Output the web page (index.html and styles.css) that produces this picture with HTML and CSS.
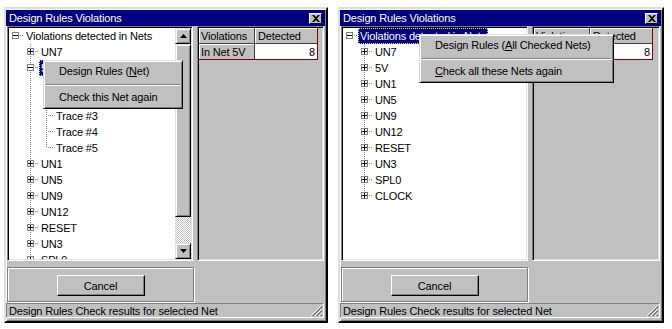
FILE: index.html
```html
<!DOCTYPE html>
<html lang="en">
<head>
    <meta charset="UTF-8">
    <title>Design Rules Violations</title>
    <link rel="stylesheet" href="styles.css">
</head>
<body>
<div class="screen">

    <!-- Left window: one net expanded -->
    <div class="window">
        <div class="titlebar">
            <span class="title">Design Rules Violations</span>
            <span class="close"><svg width="8" height="7" viewBox="0 0 8 7"><path d="M0 0h2l2 2 2-2h2L5 3.5 8 7H6L4 5 2 7H0l3-3.5z" fill="#000"/></svg></span>
        </div>
        <div class="main">
            <div class="tree">
                <div class="items">
                    <div class="row l0"><span class="exp"><span class="box minus"></span></span><span class="label">Violations detected in Nets</span></div>
                    <div class="row l1"><span class="exp"><span class="box plus"></span></span><span class="label">UN7</span></div>
                    <div class="row l1"><span class="exp"><span class="box minus"></span></span><span class="label sel">5V</span></div>
                    <div class="row l2"><span class="label">Trace #1</span></div>
                    <div class="row l2"><span class="label">Trace #2</span></div>
                    <div class="row l2"><span class="label">Trace #3</span></div>
                    <div class="row l2"><span class="label">Trace #4</span></div>
                    <div class="row l2 last"><span class="label">Trace #5</span></div>
                    <div class="row l1"><span class="exp"><span class="box plus"></span></span><span class="label">UN1</span></div>
                    <div class="row l1"><span class="exp"><span class="box plus"></span></span><span class="label">UN5</span></div>
                    <div class="row l1"><span class="exp"><span class="box plus"></span></span><span class="label">UN9</span></div>
                    <div class="row l1"><span class="exp"><span class="box plus"></span></span><span class="label">UN12</span></div>
                    <div class="row l1"><span class="exp"><span class="box plus"></span></span><span class="label">RESET</span></div>
                    <div class="row l1"><span class="exp"><span class="box plus"></span></span><span class="label">UN3</span></div>
                    <div class="row l1"><span class="exp"><span class="box plus"></span></span><span class="label">SPL0</span></div>
                    <div class="row l1 last"><span class="exp"><span class="box plus"></span></span><span class="label">CLOCK</span></div>
                </div>
                <div class="scrollbar">
                    <div class="sb-btn"><svg width="7" height="4" viewBox="0 0 7 4"><path d="M3.5 0L7 4H0z" fill="#000"/></svg></div>
                    <div class="sb-thumb"></div>
                    <div class="sb-track"></div>
                    <div class="sb-btn"><svg width="7" height="4" viewBox="0 0 7 4"><path d="M0 0h7L3.5 4z" fill="#000"/></svg></div>
                </div>
            </div>
            <div class="grid-panel">
                <table class="grid">
                    <tr><td class="hd c1">Violations</td><td class="hd c2">Detected</td></tr>
                    <tr><td class="hd c1">In Net 5V</td><td class="val c2">8</td></tr>
                </table>
            </div>
        </div>
        <div class="lower">
            <div class="group"><div class="button">Cancel</div></div>
        </div>
        <div class="status">
            <span>Design Rules Check results for selected Net</span>
            <svg class="grip" width="12" height="12" viewBox="0 0 12 12" shape-rendering="crispEdges">
                <path d="M11 0L0 11M11 4L4 11M11 8L8 11" stroke="#fff"/>
                <path d="M11 1L1 11M11 2L2 11M11 5L5 11M11 6L6 11M11 9L9 11M11 10L10 11" stroke="#808080"/>
            </svg>
        </div>
    </div>

    <!-- Right window: root selected -->
    <div class="window wide">
        <div class="titlebar">
            <span class="title">Design Rules Violations</span>
            <span class="close"><svg width="8" height="7" viewBox="0 0 8 7"><path d="M0 0h2l2 2 2-2h2L5 3.5 8 7H6L4 5 2 7H0l3-3.5z" fill="#000"/></svg></span>
        </div>
        <div class="main">
            <div class="tree wide">
                <div class="items">
                    <div class="row l0"><span class="exp"><span class="box minus"></span></span><span class="label sel">Violations detected in Nets</span></div>
                    <div class="row l1"><span class="exp"><span class="box plus"></span></span><span class="label">UN7</span></div>
                    <div class="row l1"><span class="exp"><span class="box plus"></span></span><span class="label">5V</span></div>
                    <div class="row l1"><span class="exp"><span class="box plus"></span></span><span class="label">UN1</span></div>
                    <div class="row l1"><span class="exp"><span class="box plus"></span></span><span class="label">UN5</span></div>
                    <div class="row l1"><span class="exp"><span class="box plus"></span></span><span class="label">UN9</span></div>
                    <div class="row l1"><span class="exp"><span class="box plus"></span></span><span class="label">UN12</span></div>
                    <div class="row l1"><span class="exp"><span class="box plus"></span></span><span class="label">RESET</span></div>
                    <div class="row l1"><span class="exp"><span class="box plus"></span></span><span class="label">UN3</span></div>
                    <div class="row l1"><span class="exp"><span class="box plus"></span></span><span class="label">SPL0</span></div>
                    <div class="row l1 last"><span class="exp"><span class="box plus"></span></span><span class="label">CLOCK</span></div>
                </div>
            </div>
            <div class="grid-panel">
                <table class="grid">
                    <tr><td class="hd c1">Violations</td><td class="hd c2">Detected</td></tr>
                    <tr><td class="hd c1">In Net 5V</td><td class="val c2">8</td></tr>
                </table>
            </div>
        </div>
        <div class="lower">
            <div class="group"><div class="button">Cancel</div></div>
        </div>
        <div class="status">
            <span>Design Rules Check results for selected Net</span>
            <svg class="grip" width="12" height="12" viewBox="0 0 12 12" shape-rendering="crispEdges">
                <path d="M11 0L0 11M11 4L4 11M11 8L8 11" stroke="#fff"/>
                <path d="M11 1L1 11M11 2L2 11M11 5L5 11M11 6L6 11M11 9L9 11M11 10L10 11" stroke="#808080"/>
            </svg>
        </div>
    </div>

    <!-- Context menus -->
    <div class="menu menu-net">
        <div class="menu-item">Design Rules (<u>N</u>et)</div>
        <div class="menu-sep"></div>
        <div class="menu-item">Check this Net again</div>
    </div>
    <div class="menu menu-all">
        <div class="menu-item">Design Rules (<u>A</u>ll Checked Nets)</div>
        <div class="menu-sep"></div>
        <div class="menu-item"><u>C</u>heck all these Nets again</div>
    </div>
</div>
</body>
</html>
```

FILE: styles.css
```css
body {
    margin: 0;
    background-color: #ffffff;
    font-family: "Liberation Sans", Arial, sans-serif;
    font-size: 11px;
    letter-spacing: -0.15px;
    color: #000000;
}
.screen {
    position: relative;
    display: flex;
    gap: 10px;
    padding: 7px 0 0 4px;
}
.window {
    box-sizing: border-box;
    width: 324px;
    height: 316px;
    padding-top: 1px;
    display: flex;
    flex-direction: column;
    background-color: #c0c0c0;
    border: 2px solid;
    border-color: #dfdfdf #000000 #000000 #dfdfdf;
    box-shadow: inset 1px 1px #ffffff, inset -1px -1px #808080;
}
.window.wide {
    width: 326px;
}
.titlebar {
    height: 16px;
    margin-right: 1px;
    padding: 0 3px;
    display: flex;
    align-items: center;
    background-color: #000080;
    color: #ffffff;
}
.close {
    box-sizing: border-box;
    width: 13px;
    height: 11px;
    margin-left: auto;
    display: flex;
    align-items: center;
    justify-content: center;
    background-color: #c0c0c0;
    border: 1px solid;
    border-color: #ffffff #000000 #000000 #ffffff;
}
.main {
    height: 235px;
    display: flex;
    gap: 4px;
    padding: 0 2px 0 1px;
}
.tree,
.grid-panel {
    box-sizing: border-box;
    height: 235px;
    padding: 1px;
    border: 1px solid;
    border-color: #808080 #ffffff #ffffff #808080;
    box-shadow: inset 1px 1px #000000, inset -1px -1px #dfdfdf;
}
.tree {
    width: 186px;
    display: flex;
    background-color: #ffffff;
}
.tree.wide {
    width: 187px;
}
.items {
    flex: 1;
    overflow: hidden;
}
.row {
    height: 16px;
    display: flex;
    white-space: nowrap;
}
.row.l0 {
    padding-left: 3px;
}
.row.l1 {
    padding-left: 18px;
    background: repeating-linear-gradient(#808080 0 1px, transparent 1px 2px) 21px 0 / 1px 100% no-repeat;
}
.row.l1.last {
    background-size: 1px 8px;
}
.row.l2 {
    padding-left: 45px;
    background:
        repeating-linear-gradient(#808080 0 1px, transparent 1px 2px) 21px 0 / 1px 100% no-repeat,
        repeating-linear-gradient(#808080 0 1px, transparent 1px 2px) 37px 0 / 1px 100% no-repeat,
        repeating-linear-gradient(90deg, #808080 0 1px, transparent 1px 2px) 39px 7px / 6px 1px no-repeat;
}
.row.l2.last {
    background-size: 1px 100%, 1px 8px, 6px 1px;
}
.exp {
    width: 12px;
    flex-shrink: 0;
    background: repeating-linear-gradient(90deg, #808080 0 1px, transparent 1px 2px) 8px 7px / 4px 1px no-repeat;
}
.box {
    display: block;
    box-sizing: border-box;
    width: 7px;
    height: 7px;
    margin-top: 4px;
    border: 1px solid #808080;
}
.box.minus {
    background: linear-gradient(#000, #000) center / 5px 1px no-repeat, #ffffff;
}
.box.plus {
    background:
        linear-gradient(#000, #000) center / 5px 1px no-repeat,
        linear-gradient(#000, #000) center / 1px 5px no-repeat,
        #ffffff;
}
.label {
    box-sizing: border-box;
    height: 16px;
    line-height: 16px;
    padding: 0 2px;
}
.label.sel {
    background-color: #000080;
    color: #ffffff;
    outline: 1px dotted #e0e0a0;
    outline-offset: -1px;
}
.scrollbar {
    width: 16px;
    display: flex;
    flex-direction: column;
}
.sb-btn,
.sb-thumb {
    box-sizing: border-box;
    background-color: #c0c0c0;
    border: 1px solid;
    border-color: #dfdfdf #000000 #000000 #dfdfdf;
    box-shadow: inset 1px 1px #ffffff, inset -1px -1px #808080;
}
.sb-btn {
    height: 16px;
    display: flex;
    align-items: center;
    justify-content: center;
}
.sb-thumb {
    height: 173px;
}
.sb-track {
    flex: 1;
    background: repeating-conic-gradient(#ffffff 0 25%, #c0c0c0 0 50%) 0 0 / 2px 2px;
}
.grid-panel {
    flex: 1;
    background-color: #c0c0c0;
}
.grid {
    border-spacing: 0;
    border-right: 1px solid #800000;
    border-bottom: 1px solid #800000;
}
.grid td {
    box-sizing: border-box;
    height: 16px;
    padding: 0 2px;
    white-space: nowrap;
    border-right: 1px solid #404040;
    border-bottom: 1px solid #404040;
}
.grid tr:last-child td {
    height: 15px;
    border-bottom: none;
}
.grid td.c1 {
    width: 56px;
}
.grid td.c2 {
    width: 62px;
    border-right: none;
}
.grid td.hd {
    box-shadow: inset 1px 1px #ffffff;
}
.grid td.c2.hd {
    padding-left: 3px;
}
.grid td.val {
    background-color: #ffffff;
    text-align: right;
}
.lower {
    margin-top: 6px;
    padding-left: 1px;
    display: flex;
}
.group {
    box-sizing: border-box;
    width: 187px;
    height: 35px;
    display: flex;
    align-items: center;
    justify-content: center;
    border: 1px solid #808080;
    box-shadow: inset 1px 1px #ffffff, 1px 1px #ffffff;
}
.button {
    box-sizing: border-box;
    width: 88px;
    height: 21px;
    margin-top: 2px;
    display: flex;
    align-items: center;
    justify-content: center;
    background-color: #c0c0c0;
    border: 1px solid;
    border-color: #ffffff #000000 #000000 #ffffff;
    box-shadow: inset -1px -1px #808080;
}
.status {
    box-sizing: border-box;
    height: 15px;
    margin: 1px 2px 0 0;
    padding-left: 2px;
    display: flex;
    align-items: center;
    border: 1px solid;
    border-color: #808080 #ffffff #ffffff #808080;
}
.grip {
    margin-left: auto;
    align-self: flex-end;
}
.menu {
    position: absolute;
    padding: 1px;
    background-color: #c0c0c0;
    border: 1px solid;
    border-color: #dfdfdf #000000 #000000 #dfdfdf;
    box-shadow: inset 1px 1px #ffffff, inset -1px -1px #808080;
}
.menu-net {
    left: 43px;
    top: 60px;
    width: 136px;
}
.menu-all {
    left: 419px;
    top: 34px;
    width: 191px;
}
.menu-item {
    height: 19px;
    line-height: 19px;
    padding-left: 14px;
    white-space: nowrap;
}
.menu-sep {
    height: 0;
    margin: 3px 1px 2px;
    border-top: 1px solid #808080;
    border-bottom: 1px solid #ffffff;
}
```
